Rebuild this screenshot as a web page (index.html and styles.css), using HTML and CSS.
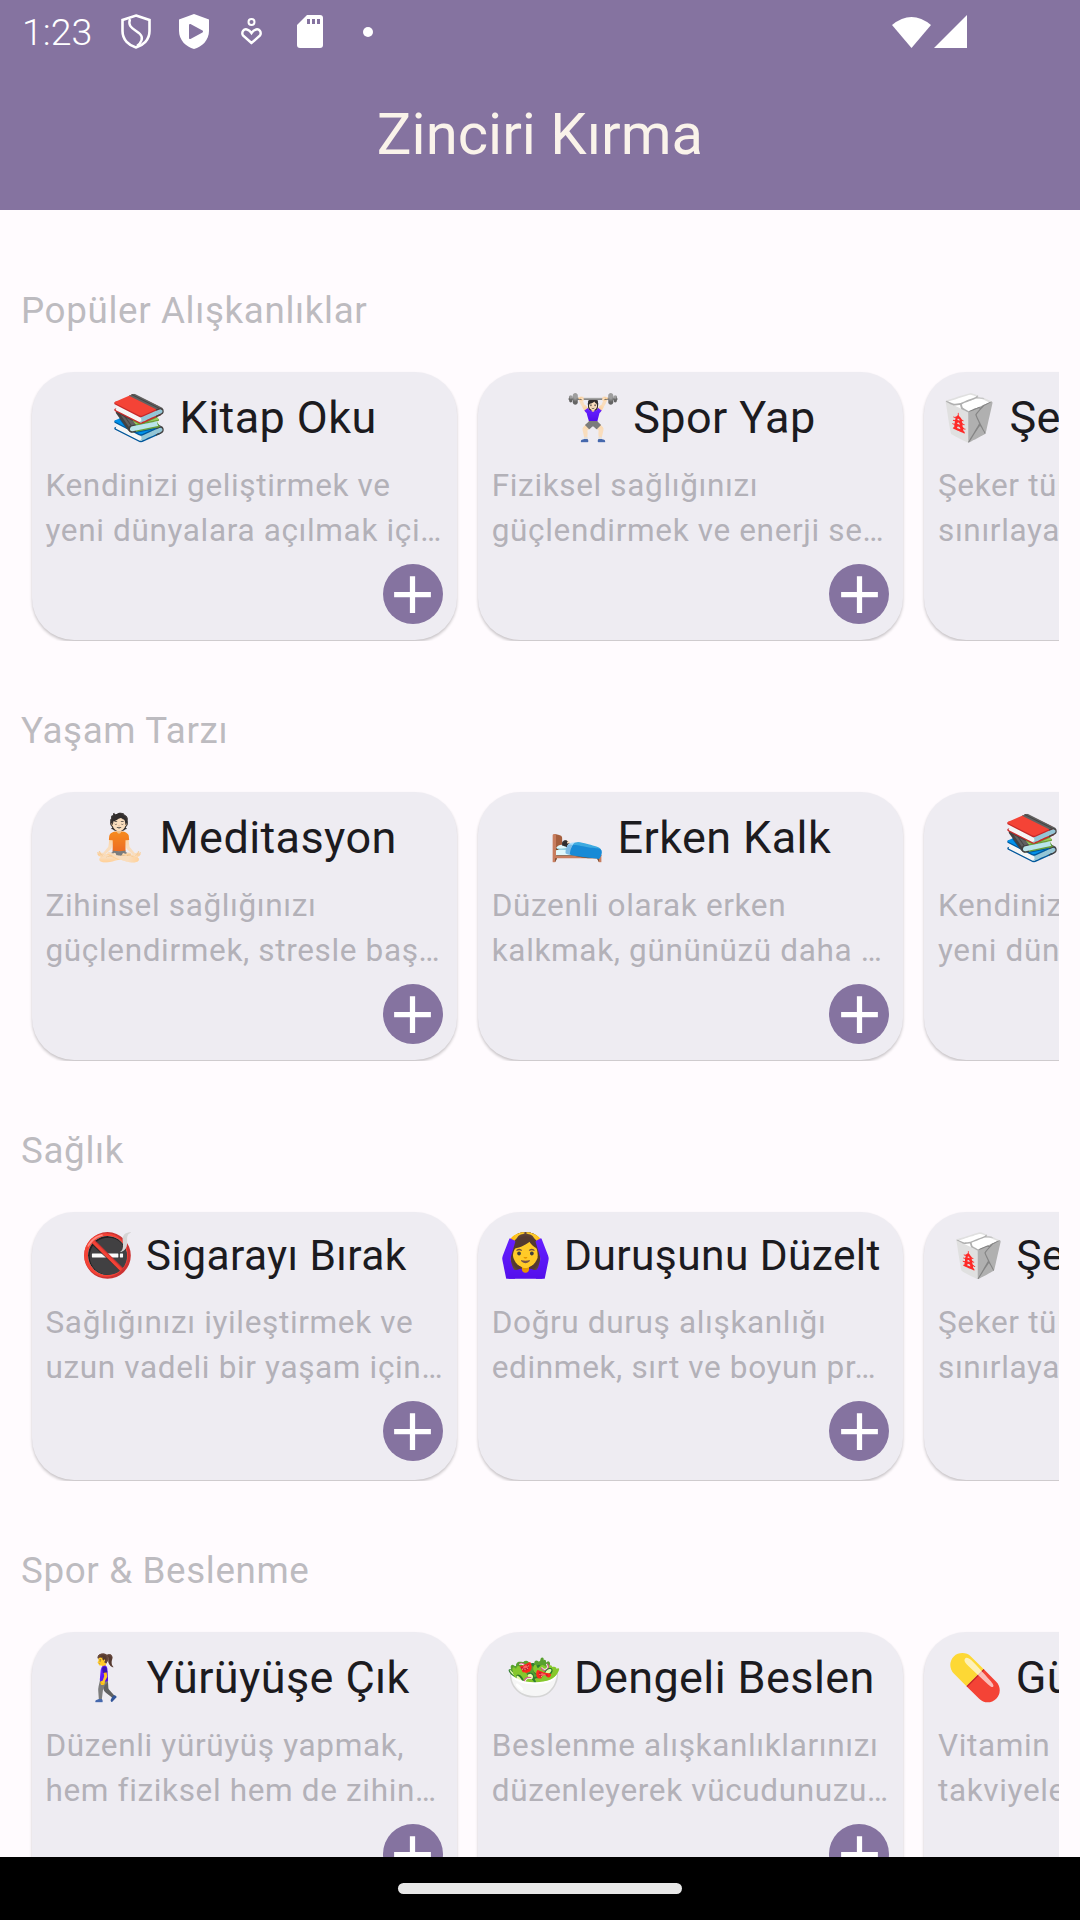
FILE: index.html
```html
<!DOCTYPE html>
<html lang="tr">
<head>
<meta charset="UTF-8">
<meta name="viewport" content="width=device-width, initial-scale=1.0">
<title>Zinciri Kırma</title>
<link rel="stylesheet" href="styles.css">
</head>
<body>

<header class="top">
  <div class="status">
    <span class="time">1:23</span>
    <svg class="ic-shield" viewBox="0 0 30 35"><path d="M15 1.5L28.5 6V17C28.5 26 22 31.5 15 33.5C8 31.5 1.5 26 1.5 17V6Z" fill="none" stroke="#fff" stroke-width="2.6"/><path d="M9 5C6 14 14 15 19 20C23 24 20 29 16 32" fill="none" stroke="#fff" stroke-width="2.4"/></svg>
    <svg class="ic-play" viewBox="0 0 30 35"><path d="M15 0L30 5.5V17C30 26 23 33 15 35C7 33 0 26 0 17V5.5Z" fill="#fff"/><path d="M11 11L23 17.5L11 24Z" fill="#8573a0" stroke="#8573a0" stroke-width="2" stroke-linejoin="round"/></svg>
    <svg class="ic-heart" viewBox="0 0 21 27"><circle cx="10.5" cy="4" r="3" fill="none" stroke="#fff" stroke-width="2"/><path d="M10.5 25L2 17.5C0 14 3 10.500 6 11.500C8 12 9.500 13.500 10.500 15C11.500 13.500 13 12 15 11.500C18 10.500 21 14 19 17.500Z" fill="none" stroke="#fff" stroke-width="2.400"/></svg>
    <svg class="ic-sd" viewBox="0 0 26 33"><path d="M10 0H23a3 3 0 0 1 3 3V30a3 3 0 0 1-3 3H3a3 3 0 0 1-3-3V10Z" fill="#fff"/><path d="M10 4h3v5h-3zM15 4h3v5h-3zM20 4h3v5h-3z" fill="#8573a0"/></svg>
    <span class="dot"></span>
    <span class="status-right">
      <svg class="ic-wifi" viewBox="0 0 39 33"><path d="M0 10Q19.500-6 39 10L19.500 33Z" fill="#fff"/></svg>
      <svg class="ic-signal" viewBox="0 0 33 33"><path d="M33 0V33H0Z" fill="#fff"/></svg>
    </span>
  </div>
  <h1 class="app-title">Zinciri Kırma</h1>
</header>

<main class="page">

  <section class="group">
    <h2 class="group-title">Popüler Alışkanlıklar</h2>
    <div class="cards">
      <article class="card">
        <h3 class="card-title">📚 Kitap Oku</h3>
        <p class="card-text">Kendinizi geliştirmek ve<br>yeni dünyalara açılmak içi…</p>
        <button class="add"><svg viewBox="0 0 24 24"><path d="M19 13h-6v6h-2v-6H5v-2h6V5h2v6h6v2z"/></svg></button>
      </article>
      <article class="card">
        <h3 class="card-title">🏋🏻‍♀️ Spor Yap</h3>
        <p class="card-text">Fiziksel sağlığınızı<br>güçlendirmek ve enerji se…</p>
        <button class="add"><svg viewBox="0 0 24 24"><path d="M19 13h-6v6h-2v-6H5v-2h6V5h2v6h6v2z"/></svg></button>
      </article>
      <article class="card">
        <h3 class="card-title">🥡 Şekersiz Yaşam</h3>
        <p class="card-text">Şeker tüketimini<br>sınırlayarak sağlığınızı</p>
        <button class="add"><svg viewBox="0 0 24 24"><path d="M19 13h-6v6h-2v-6H5v-2h6V5h2v6h6v2z"/></svg></button>
      </article>
    </div>
  </section>

  <section class="group">
    <h2 class="group-title">Yaşam Tarzı</h2>
    <div class="cards">
      <article class="card">
        <h3 class="card-title">🧘🏻 Meditasyon</h3>
        <p class="card-text">Zihinsel sağlığınızı<br>güçlendirmek, stresle baş…</p>
        <button class="add"><svg viewBox="0 0 24 24"><path d="M19 13h-6v6h-2v-6H5v-2h6V5h2v6h6v2z"/></svg></button>
      </article>
      <article class="card">
        <h3 class="card-title">🛌🏻 Erken Kalk</h3>
        <p class="card-text">Düzenli olarak erken<br>kalkmak, gününüzü daha …</p>
        <button class="add"><svg viewBox="0 0 24 24"><path d="M19 13h-6v6h-2v-6H5v-2h6V5h2v6h6v2z"/></svg></button>
      </article>
      <article class="card">
        <h3 class="card-title">📚 Kitap Oku</h3>
        <p class="card-text">Kendinizi geliştirmek ve<br>yeni dünyalara açılmak içi…</p>
        <button class="add"><svg viewBox="0 0 24 24"><path d="M19 13h-6v6h-2v-6H5v-2h6V5h2v6h6v2z"/></svg></button>
      </article>
    </div>
  </section>

  <section class="group group-tight">
    <h2 class="group-title">Sağlık</h2>
    <div class="cards">
      <article class="card">
        <h3 class="card-title">🚭 Sigarayı Bırak</h3>
        <p class="card-text">Sağlığınızı iyileştirmek ve<br>uzun vadeli bir yaşam için…</p>
        <button class="add"><svg viewBox="0 0 24 24"><path d="M19 13h-6v6h-2v-6H5v-2h6V5h2v6h6v2z"/></svg></button>
      </article>
      <article class="card">
        <h3 class="card-title">🙆‍♀️ Duruşunu Düzelt</h3>
        <p class="card-text">Doğru duruş alışkanlığı<br>edinmek, sırt ve boyun pr…</p>
        <button class="add"><svg viewBox="0 0 24 24"><path d="M19 13h-6v6h-2v-6H5v-2h6V5h2v6h6v2z"/></svg></button>
      </article>
      <article class="card">
        <h3 class="card-title">🥡 Şekersiz Yaşam</h3>
        <p class="card-text">Şeker tüketimini<br>sınırlayarak sağlığınızı</p>
        <button class="add"><svg viewBox="0 0 24 24"><path d="M19 13h-6v6h-2v-6H5v-2h6V5h2v6h6v2z"/></svg></button>
      </article>
    </div>
  </section>

  <section class="group">
    <h2 class="group-title">Spor &amp; Beslenme</h2>
    <div class="cards">
      <article class="card">
        <h3 class="card-title">🚶‍♀️ Yürüyüşe Çık</h3>
        <p class="card-text">Düzenli yürüyüş yapmak,<br>hem fiziksel hem de zihin…</p>
        <button class="add"><svg viewBox="0 0 24 24"><path d="M19 13h-6v6h-2v-6H5v-2h6V5h2v6h6v2z"/></svg></button>
      </article>
      <article class="card">
        <h3 class="card-title">🥗 Dengeli Beslen</h3>
        <p class="card-text">Beslenme alışkanlıklarınızı<br>düzenleyerek vücudunuzu…</p>
        <button class="add"><svg viewBox="0 0 24 24"><path d="M19 13h-6v6h-2v-6H5v-2h6V5h2v6h6v2z"/></svg></button>
      </article>
      <article class="card">
        <h3 class="card-title">💊 Günlük Vitamin</h3>
        <p class="card-text">Vitamin ve mineral<br>takviyeleri alarak</p>
        <button class="add"><svg viewBox="0 0 24 24"><path d="M19 13h-6v6h-2v-6H5v-2h6V5h2v6h6v2z"/></svg></button>
      </article>
    </div>
  </section>

</main>

<footer class="navbar"><span class="home-pill"></span></footer>

</body>
</html>
```

FILE: styles.css
```css
* {
  box-sizing: border-box;
}
html, body {
  margin: 0;
  height: 100%;
}
body {
  width: 1080px;
  height: 1920px;
  display: flex;
  flex-direction: column;
  overflow: hidden;
  background-color: #fffbfe;
  font-family: Roboto, "Noto Color Emoji", sans-serif;
}

/* Purple top area */
.top {
  flex: none;
  height: 210px;
  background-color: #8573a0;
}
.status {
  display: flex;
  align-items: center;
  height: 63px;
  padding: 0 113px 0 22px;
  color: #fff;
}
.time {
  font-size: 37.5px;
  font-weight: 300;
  width: 99px;
}
.status svg {
  display: block;
  flex: none;
}
.ic-shield, .ic-play {
  width: 30px;
  height: 35px;
}
.ic-play {
  margin-left: 28px;
}
.ic-heart {
  width: 21px;
  height: 27px;
  margin-left: 32px;
}
.ic-sd {
  width: 26px;
  height: 33px;
  margin-left: 35px;
}
.dot {
  width: 10px;
  height: 10px;
  margin-left: 40px;
  border-radius: 50%;
  background-color: #fff;
}
.status-right {
  display: flex;
  gap: 3px;
  margin-left: auto;
}
.ic-wifi {
  width: 39px;
  height: 33px;
}
.ic-signal {
  width: 33px;
  height: 33px;
}
.app-title {
  margin: 0;
  text-align: center;
  font-size: 58px;
  font-weight: 400;
  line-height: 142px;
  color: #faf3ea;
}

/* Sections */
.page {
  flex: 1;
  min-height: 0;
  overflow: hidden;
  padding: 61px 21px 0;
}
.group {
  height: 420px;
}
.group-title {
  margin: 0;
  height: 80px;
  font-size: 36.75px;
  font-weight: 400;
  line-height: 80px;
  letter-spacing: 0.65px;
  color: #bdbbc0;
}
.cards {
  display: flex;
  overflow: hidden;
  height: 290px;
  padding-top: 21px;
}

/* Cards */
.card {
  flex: none;
  display: flex;
  flex-direction: column;
  width: 425.25px;
  height: 268px;
  margin: 0 10.5px;
  padding: 0 14px 16px;
  border-radius: 42px;
  background-color: #eeecf2;
  box-shadow: 0 2px 3px rgba(0, 0, 0, 0.22);
}
.card-title {
  margin: 0;
  padding-top: 13px;
  text-align: center;
  white-space: nowrap;
  font-size: 45px;
  font-weight: 400;
  line-height: 66px;
  letter-spacing: 0.4px;
  color: #1c1b1f;
}
.card-text {
  margin: 12px 0 0;
  white-space: nowrap;
  font-size: 31.5px;
  line-height: 45px;
  letter-spacing: 0.65px;
  color: #b3b1b8;
}
.group-tight .card-title {
  padding-top: 11px;
  font-size: 42.5px;
}
.group-tight .card-text {
  margin-top: 11px;
}
.add {
  display: flex;
  align-items: center;
  justify-content: center;
  width: 60px;
  height: 60px;
  margin: auto 0 0 auto;
  padding: 0;
  border: none;
  border-radius: 50%;
  background-color: #8573a0;
}
.add svg {
  flex: none;
  width: 63px;
  height: 63px;
  fill: #fff;
}
.group-tight .add {
  margin-bottom: 3px;
}

/* Android gesture bar */
.navbar {
  flex: none;
  display: flex;
  align-items: center;
  justify-content: center;
  height: 63px;
  background-color: #000;
}
.home-pill {
  width: 284px;
  height: 11px;
  border-radius: 6px;
  background-color: #e8e8e8;
}
```
